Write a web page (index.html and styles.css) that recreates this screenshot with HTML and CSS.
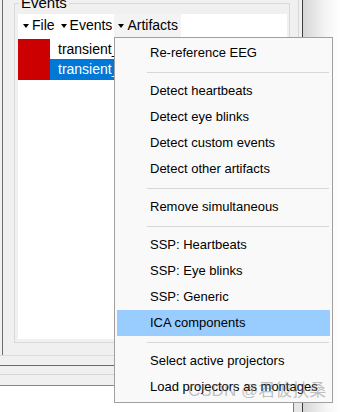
FILE: index.html
```html
<!DOCTYPE html>
<html>
<head>
<meta charset="utf-8">
<link rel="stylesheet" href="styles.css">
</head>
<body>
<div class="app">
  <div class="left">
    <div class="upper">
      <div class="group">
        <span class="legend">Events</span>
        <div class="inner">
          <div class="toolbar">
            <div class="tb-btn"><span class="tri"></span><span>File</span></div>
            <div class="tb-btn"><span class="tri"></span><span>Events</span></div>
            <div class="tb-btn active"><span class="tri"></span><span>Artifacts</span></div>
          </div>
          <div class="list">
            <div class="swatch"></div>
            <div class="rows">
              <div class="row">transient_</div>
              <div class="row selected">transient_</div>
            </div>
          </div>
        </div>
      </div>
    </div>
    <div class="lower">
      <div class="l1"></div>
      <div class="l2"></div>
      <div class="l3"></div>
      <div class="l4"><div class="strip"></div></div>
    </div>
  </div>
  <div class="shade"></div>
</div>

<div class="menu">
  <div class="item">Re-reference EEG</div>
  <div class="sep"></div>
  <div class="item">Detect heartbeats</div>
  <div class="item">Detect eye blinks</div>
  <div class="item">Detect custom events</div>
  <div class="item">Detect other artifacts</div>
  <div class="sep"></div>
  <div class="item">Remove simultaneous</div>
  <div class="sep"></div>
  <div class="item">SSP: Heartbeats</div>
  <div class="item">SSP: Eye blinks</div>
  <div class="item">SSP: Generic</div>
  <div class="item hover">ICA components</div>
  <div class="sep"></div>
  <div class="item">Select active projectors</div>
  <div class="item">Load projectors as montages</div>
</div>

<div class="watermark">CSDN @君彼扶桑</div>
</body>
</html>
```

FILE: styles.css
```css
* { box-sizing: border-box; }
html, body { margin: 0; padding: 0; }
body {
  width: 340px;
  height: 412px;
  overflow: hidden;
  position: relative;
  background: #f0f0f0;
  font-family: "Liberation Sans", Arial, sans-serif;
  font-size: 13px;
  color: #000;
}
.app { display: flex; height: 412px; }
.left {
  width: 302px;
  display: flex;
  flex-direction: column;
  background: #f0f0f0;
}
.upper {
  height: 355px;
  margin-left: 2px;
  margin-right: 3px;
  border-left: 1px solid #6e6e6e;
  border-right: 1px solid #d6d6d6;
  padding-left: 11px;
  padding-top: 3px;
}
.group {
  position: relative;
  width: 276px;
  height: 340px;
  border: 1px solid #d9d9d9;
  padding: 10px 2px 3px 3px;
}
.legend {
  position: absolute;
  top: -10px;
  left: 4px;
  padding: 0 2px;
  background: #f0f0f0;
  font-size: 15px;
  line-height: 17px;
}
.inner {
  height: 100%;
  background: #fff;
  display: flex;
  flex-direction: column;
  font-size: 14px;
}
.toolbar {
  height: 23px;
  display: flex;
  align-items: stretch;
}
.tb-btn {
  display: flex;
  align-items: center;
  gap: 3px;
  padding: 0 2px 0 4px;
  line-height: 23px;
}
.tb-btn:first-child { padding-left: 5px; }
.tb-btn.active { background: #f3f3f3; padding-right: 3px; }
.tri {
  width: 0;
  height: 0;
  border-left: 3px solid transparent;
  border-right: 3px solid transparent;
  border-top: 4px solid #000;
  margin-top: 1px;
}
.list {
  display: flex;
  padding-top: 2px;
}
.swatch {
  width: 32px;
  height: 41px;
  background: #cc0000;
}
.rows { flex: 1; display: flex; flex-direction: column; }
.row {
  height: 20px;
  line-height: 20px;
  padding-left: 8px;
  white-space: nowrap;
  overflow: hidden;
}
.row.selected {
  height: 21px;
  background: #0078d7;
  color: #fff;
}
.lower { flex: 1; display: flex; flex-direction: column; }
.l1 { height: 10px; border-top: 1px solid #dcdcdc; }
.l2 { height: 9px; border-top: 1px solid #6a6a6a; }
.l3 { height: 11px; border-top: 1px solid #d6d6d6; }
.l4 {
  flex: 1;
  border-top: 1px solid #8a8a8a;
  background: #fff;
  display: flex;
  justify-content: flex-end;
}
.strip {
  width: 9px;
  border-left: 1px solid #7a7a7a;
  background: #e6e6e6;
}
.shade {
  flex: 1;
  border-left: 1px solid #3c3c3c;
  background: linear-gradient(to right, #d6d6d6, #f4f4f4 60%, #ffffff);
}
.menu {
  position: absolute;
  left: 114px;
  top: 37px;
  width: 219px;
  border: 1px solid #a0a0a0;
  background: #f9f9f9;
  padding: 2px;
}
.item {
  height: 26px;
  line-height: 26px;
  padding-left: 33px;
  white-space: nowrap;
}
.item.hover { background: #99ccff; }
.sep {
  height: 12px;
  display: flex;
  align-items: center;
  padding-left: 30px;
  padding-right: 1px;
}
.sep::before {
  content: "";
  flex: 1;
  height: 1px;
  background: #d7d7d7;
}
.watermark {
  position: absolute;
  left: 188px;
  top: 381px;
  font-size: 17px;
  line-height: 20px;
  color: rgba(120, 120, 120, 0.45);
  font-family: "Liberation Sans", "Noto Sans CJK SC", sans-serif;
  white-space: nowrap;
}
```
